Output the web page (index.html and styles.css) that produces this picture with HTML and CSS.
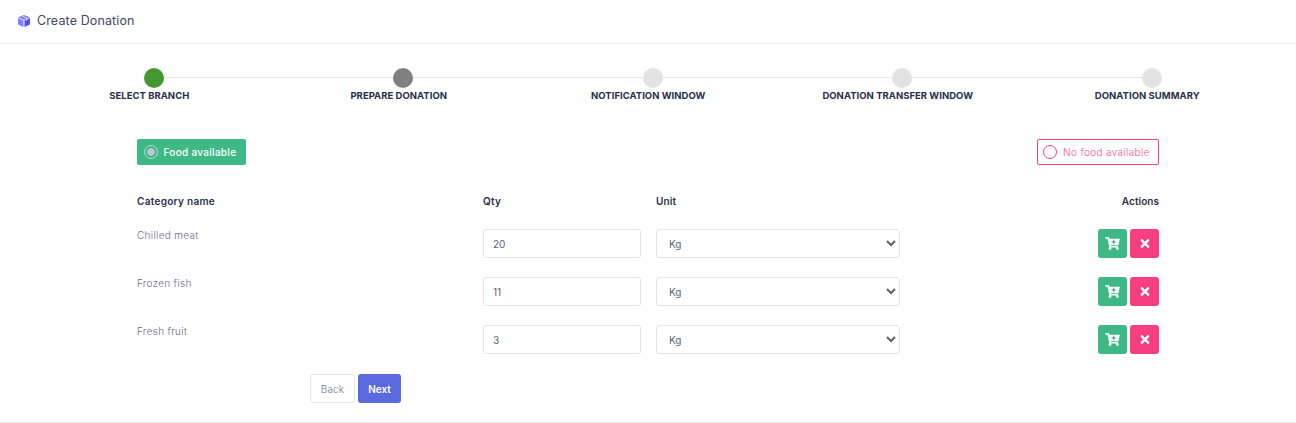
FILE: index.html
```html
<!DOCTYPE html>
<html lang="en">
<head>
<meta charset="utf-8">
<title>Create Donation</title>
<link rel="stylesheet" href="styles.css">
</head>
<body>
<svg class="sprites" aria-hidden="true">
  <symbol id="cart" viewBox="0 0 576 512">
    <path fill="#fff" fill-rule="evenodd" d="M504.717 320H211.572l6.545 32h268.418c15.401 0 26.816 14.301 23.403 29.319l-5.517 24.276C523.112 414.668 536 433.828 536 456c0 31.202-25.519 56.444-56.824 55.994-29.823-.429-54.35-24.631-55.155-54.447-.44-16.287 6.085-31.049 16.803-41.548H231.176c10.377 10.166 16.824 24.322 16.824 40.001 0 31.81-26.528 57.42-58.67 55.920-28.54-1.332-51.752-24.39-53.18-52.924-1.1-22.035 10.49-41.456 27.85-51.437L93.93 64H24C10.745 64 0 53.255 0 40V24C0 10.745 10.745 0 24 0h102.529c11.401 0 21.228 8.021 23.513 19.19L159.208 64H552c15.401 0 26.816 14.301 23.403 29.319l-47.273 208C525.637 312.246 515.923 320 504.717 320zM408 168h-48v-40c0-8.837-7.163-16-16-16h-16c-8.837 0-16 7.163-16 16v40h-48c-8.837 0-16 7.163-16 16v16c0 8.837 7.163 16 16 16h48v40c0 8.837 7.163 16 16 16h16c8.837 0 16-7.163 16-16v-40h48c8.837 0 16-7.163 16-16v-16c0-8.837-7.163-16-16-16z"/>
  </symbol>
  <symbol id="times" viewBox="0 0 352 512">
    <path fill="#fff" d="M242.700 256l100.100-100.100c12.300-12.300 12.300-32.200 0-44.500l-22.200-22.200c-12.300-12.300-32.200-12.300-44.500 0L176 189.300 75.900 89.200c-12.300-12.300-32.200-12.300-44.500 0L9.200 111.500c-12.300 12.300-12.300 32.200 0 44.500L109.300 256 9.200 356.100c-12.300 12.300-12.300 32.200 0 44.500l22.200 22.200c12.300 12.300 32.200 12.300 44.500 0L176 322.700l100.100 100.100c12.300 12.300 32.200 12.300 44.500 0l22.200-22.200c12.300-12.300 12.300-32.200 0-44.500L242.700 256z"/>
  </symbol>
</svg>
<header class="topbar">
  <svg class="box-icon" viewBox="0 0 12 12" aria-hidden="true">
    <path fill="#7a76f6" d="M6 0 11.800 2.300 6 4.900 .2 2.300Z"/>
    <path fill="#8480fb" d="M0 3.100 5.500 5.600V12L0 9.500Z"/>
    <path fill="#4f52e6" d="M12 3.100 6.500 5.600V12L12 9.500Z"/>
    <path fill="#d8d6ff" d="M3 1.100 8.300 3.500 9.400 3 4.100 .6Z"/>
    <path fill="#d8d6ff" d="M8.300 3.500 9.400 3V5.400L8.300 5.900Z"/>
  </svg>
  <span class="page-title">Create Donation</span>
</header>
<main>
  <ol class="stepper">
    <li class="step"><span class="dot dot-done"></span><span class="step-label">SELECT BRANCH</span></li>
    <li class="step"><span class="dot dot-active"></span><span class="step-label">PREPARE DONATION</span></li>
    <li class="step"><span class="dot"></span><span class="step-label">NOTIFICATION WINDOW</span></li>
    <li class="step"><span class="dot"></span><span class="step-label">DONATION TRANSFER WINDOW</span></li>
    <li class="step step-last"><span class="dot"></span><span class="step-label">DONATION SUMMARY</span></li>
  </ol>
  <section class="form">
    <div class="choices">
      <div class="choice choice-yes"><span class="radio radio-on"></span>Food available</div>
      <div class="choice choice-no"><span class="radio"></span>No food available</div>
    </div>
    <div class="grid head">
      <div>Category name</div><div>Qty</div><div class="head-unit">Unit</div><div class="right">Actions</div>
    </div>
    <div class="grid row">
      <div class="name">Chilled meat</div>
      <input class="field" value="20">
      <select class="field select"><option>Kg</option></select>
      <div class="actions">
        <button class="icon-btn green"><svg><use href="#cart"/></svg></button>
        <button class="icon-btn pink"><svg><use href="#times"/></svg></button>
      </div>
    </div>
    <div class="grid row">
      <div class="name">Frozen fish</div>
      <input class="field" value="11">
      <select class="field select"><option>Kg</option></select>
      <div class="actions">
        <button class="icon-btn green"><svg><use href="#cart"/></svg></button>
        <button class="icon-btn pink"><svg><use href="#times"/></svg></button>
      </div>
    </div>
    <div class="grid row">
      <div class="name">Fresh fruit</div>
      <input class="field" value="3">
      <select class="field select"><option>Kg</option></select>
      <div class="actions">
        <button class="icon-btn green"><svg><use href="#cart"/></svg></button>
        <button class="icon-btn pink"><svg><use href="#times"/></svg></button>
      </div>
    </div>
    <div class="footer-btns">
      <button class="btn btn-back">Back</button>
      <button class="btn btn-next">Next</button>
    </div>
  </section>
</main>
</body>
</html>
```
FILE: styles.css
```css
* { box-sizing: border-box; }
html, body { margin: 0; padding: 0; background: #fff; }
body {
  height: 423px;
  overflow: hidden;
  font-family: "Inter", "Open Sans", "Liberation Sans", sans-serif;
  color: #2c2f4a;
  border-bottom: 1px solid #e9ebf1;
}
.sprites { display: none; }

.topbar {
  height: 44px;
  display: flex;
  align-items: center;
  gap: 7px;
  padding: 0 0 2px 18px;
  border-bottom: 1px solid #ebedf2;
}
.box-icon { width: 12px; height: 12px; }
.page-title { font-size: 12.5px; color: #44476a; letter-spacing: .12px; }

.stepper {
  list-style: none;
  margin: 0;
  padding: 24px 24px 0 24.5px;
  display: grid;
  grid-template-columns: repeat(5, 249.5px);
}
.step {
  position: relative;
  display: flex;
  flex-direction: column;
  align-items: center;
}
.step::after {
  content: "";
  position: absolute;
  top: 9px;
  left: calc(50% + 4px);
  width: 100%;
  height: 1px;
  background: #e4e4e4;
}
.step-last::after { display: none; }
.dot {
  position: relative;
  z-index: 1;
  width: 20px;
  height: 20px;
  border-radius: 50%;
  background: #e3e3e3;
  margin-left: 9px;
}
.dot-done { background: #43982f; }
.dot-active { background: #808080; }
.step-label {
  font-size: 9.5px;
  line-height: 15px;
  font-weight: 700;
  color: #2b2e4a;
  white-space: nowrap;
  letter-spacing: .03px;
}

.form { padding: 36px 137px 0; }
.choices { display: flex; justify-content: space-between; }
.choice {
  height: 26px;
  display: flex;
  align-items: center;
  border-radius: 2px;
  font-size: 10px;
  white-space: nowrap;
}
.choice-yes {
  width: 109px;
  padding-left: 7px;
  gap: 5.5px;
  background: #3eb986;
  color: #fff;
  font-weight: 500;
  letter-spacing: .3px;
}
.choice-no {
  width: 122px;
  padding-left: 5px;
  gap: 6px;
  border: 1px solid #f73f80;
  color: #f8548e;
  font-weight: 300;
  letter-spacing: .35px;
}
.radio {
  width: 14px;
  height: 14px;
  border-radius: 50%;
  border: 1px solid #f73f80;
  flex: none;
}
.radio-on {
  border-color: #b7dccb;
  background: radial-gradient(circle, #bfc5d8 0 3.5px, transparent 4px);
}

.grid {
  display: grid;
  grid-template-columns: 346px 158px 259px 1fr;
}
.head {
  margin-top: 29px;
  height: 35px;
  font-size: 10px;
  line-height: 15px;
  font-weight: 600;
  color: #2b2e4a;
  letter-spacing: .3px;
}
.head-unit { padding-left: 15px; letter-spacing: .1px; }
.right { text-align: right; letter-spacing: .05px; }
.row { height: 48px; }
.name {
  margin-top: -1px;
  font-size: 10px;
  line-height: 15px;
  font-weight: 300;
  color: #6f6880;
  letter-spacing: .3px;
}
.field {
  height: 29px;
  width: 158px;
  border: 1px solid #e2e5ee;
  border-radius: 3px;
  background: #fff;
  font-family: inherit;
  font-size: 10px;
  color: #5b5f78;
  padding: 0 9px;
  outline: none;
}
.select { margin-left: 15px; width: 244px; padding-left: 8px; }
.actions { display: flex; justify-content: flex-end; gap: 3px; }
.icon-btn {
  width: 29px;
  height: 29px;
  border: 0;
  border-radius: 3px;
  padding: 0;
  display: flex;
  align-items: center;
  justify-content: center;
}
.green { background: #3eb986; }
.green svg { width: 15px; height: 13px; }
.pink { background: #f73f80; }
.pink svg { width: 10px; height: 13px; }

.footer-btns {
  display: flex;
  gap: 3px;
  margin: 1px 0 0 173px;
}
.btn {
  height: 29px;
  border-radius: 3px;
  font-family: inherit;
  font-size: 10px;
  padding: 0;
}
.btn-back {
  width: 45px;
  background: #fff;
  border: 1px solid #e2e5ee;
  color: #6f7694;
  font-weight: 300;
  letter-spacing: .1px;
}
.btn-next {
  width: 43px;
  background: #5c69de;
  border: 0;
  color: #fff;
  font-weight: 600;
}
```
